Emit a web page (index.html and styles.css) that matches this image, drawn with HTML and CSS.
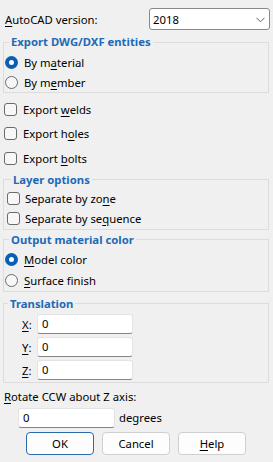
FILE: index.html
```html
<!DOCTYPE html>
<html lang="en">
<head>
  <meta charset="UTF-8">
  <title>Export DWG/DXF</title>
  <link rel="stylesheet" href="styles.css">
</head>
<body>

  <div class="dialog">
    <div class="top-row">
      <label><u>A</u>utoCAD version:</label>
      <div class="combo">
        <span>2018</span>
        <svg class="chevron" width="9" height="6" viewBox="0 0 9 6"><path d="M0.5 0.8 L4.5 4.8 L8.5 0.8" fill="none" stroke="#606060" stroke-width="1"/></svg>
      </div>
    </div>

    <fieldset class="group group-export">
      <legend>Export DWG/DXF entities</legend>
      <div class="opt"><span class="radio on"></span><span>By m<u>a</u>terial</span></div>
      <div class="opt"><span class="radio"></span><span>By m<u>e</u>mber</span></div>
    </fieldset>

    <div class="checks">
      <div class="opt"><span class="check"></span><span>Export <u>w</u>elds</span></div>
      <div class="opt"><span class="check"></span><span>Export h<u>o</u>les</span></div>
      <div class="opt"><span class="check"></span><span>Export <u>b</u>olts</span></div>
    </div>

    <fieldset class="group group-layer">
      <legend>Layer options</legend>
      <div class="opt"><span class="check"></span><span>Separate by zo<u>n</u>e</span></div>
      <div class="opt"><span class="check"></span><span>Separate by se<u>q</u>uence</span></div>
    </fieldset>

    <fieldset class="group group-color">
      <legend>Output material color</legend>
      <div class="opt"><span class="radio on"></span><span><u>M</u>odel color</span></div>
      <div class="opt"><span class="radio"></span><span><u>S</u>urface finish</span></div>
    </fieldset>

    <fieldset class="group group-move">
      <legend>Translation</legend>
      <div class="axis"><label><u>X</u>:</label><div class="field">0</div></div>
      <div class="axis"><label><u>Y</u>:</label><div class="field">0</div></div>
      <div class="axis"><label><u>Z</u>:</label><div class="field">0</div></div>
    </fieldset>

    <div class="rotate-label"><u>R</u>otate CCW about Z axis:</div>
    <div class="rotate-row">
      <div class="field wide">0</div>
      <span>degrees</span>
    </div>

    <div class="buttons">
      <button class="btn default">OK</button>
      <button class="btn">Cancel</button>
      <button class="btn"><u>H</u>elp</button>
    </div>
  </div>

</body>
</html>
```

FILE: styles.css
```css
body {
  margin: 0;
  background: #f0f0f0;
  font-family: "Noto Sans", "Open Sans", sans-serif;
  font-size: 11.3px;
  color: #000;
}

u {
  text-underline-offset: 2px;
  text-decoration-thickness: 1px;
}

.dialog {
  display: flex;
  flex-direction: column;
  padding: 0 4px 0 3px;
}

.top-row {
  display: flex;
  justify-content: space-between;
  align-items: center;
  height: 22px;
  margin-top: 8px;
  padding-left: 2px;
}

.combo {
  width: 112px;
  height: 20px;
  background: #fff;
  border: 1px solid #8a8a8a;
  border-radius: 3px;
  display: flex;
  align-items: center;
  justify-content: space-between;
  padding: 0 4px 0 3px;
  box-sizing: content-box;
  margin-right: -1px;
}

.combo .chevron {
  margin-top: 1px;
}

.group {
  margin: 5px 0 0 0;
  padding: 0;
  border: 1px solid #dcdcdc;
  min-width: 0;
}

.group legend {
  margin-left: 4px;
  padding: 0 2px;
  line-height: 14px;
  font-weight: bold;
  color: #1d6ab7;
}

.opt {
  display: flex;
  align-items: center;
  gap: 6px;
  height: 20px;
}

.group-export {
  padding: 3px 0 0 1px;
}

.radio {
  width: 11px;
  height: 11px;
  border: 1px solid #6a6a6a;
  border-radius: 50%;
  background: #f7f7f7;
  flex: none;
}

.radio.on {
  width: 5px;
  height: 5px;
  border: 4px solid #0a5fb4;
  background: #fff;
}

.check {
  width: 11px;
  height: 11px;
  border: 1px solid #6a6a6a;
  border-radius: 3px;
  background: #f7f7f7;
  flex: none;
}

.checks {
  margin-top: 4px;
  padding-left: 1px;
}

.checks .opt {
  height: 24.5px;
}

.group-layer {
  margin-top: 2px;
  padding: 2px 0 0 3px;
}

.group-layer .opt {
  gap: 5px;
}

.group-color {
  margin-top: 3px;
  padding: 2px 0 0 1px;
}

.group-color .opt {
  height: 21px;
}

.group-move {
  margin-top: 5px;
  padding: 2px 0 0 0;
}

.axis {
  display: flex;
  align-items: center;
  height: 23px;
  padding-left: 18px;
}

.axis label {
  width: 15px;
}

.field {
  width: 90px;
  height: 18px;
  background: #fff;
  border: 1px solid #e3e3e3;
  border-bottom-color: #858585;
  border-radius: 3px;
  padding: 0 0 0 4px;
  line-height: 18px;
  box-sizing: content-box;
}

.rotate-label {
  margin-top: 6px;
  padding-left: 1px;
  height: 16px;
  line-height: 16px;
}

.rotate-row {
  display: flex;
  align-items: center;
  gap: 4px;
  height: 22px;
  margin-top: 2px;
  padding-left: 15px;
}

.field.wide {
  width: 91px;
}

.buttons {
  display: flex;
  gap: 8px;
  margin-top: 3px;
  padding-left: 23px;
}

.btn {
  width: 68px;
  height: 23px;
  background: #fdfdfd;
  border: 1px solid #d0d0d0;
  border-radius: 4px;
  font-family: inherit;
  font-size: 11.3px;
  color: #000;
  padding: 0;
}

.btn.default {
  border-color: #2b6aab;
}
```
